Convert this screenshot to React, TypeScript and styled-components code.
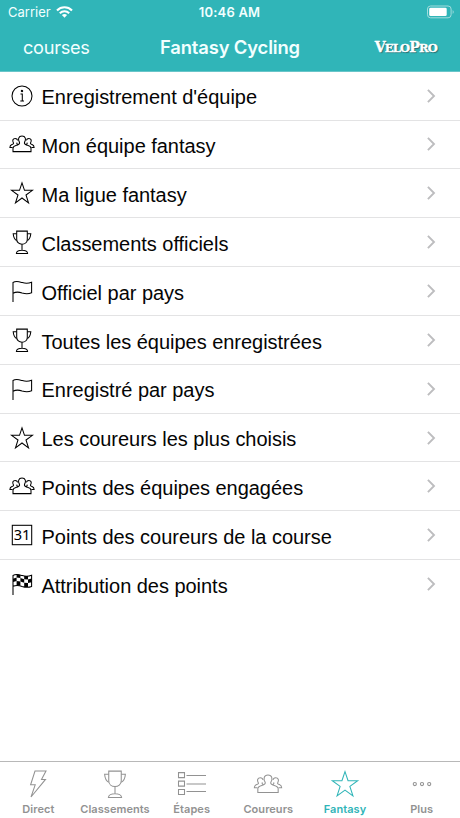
import React from "react";
import styled, { createGlobalStyle } from "styled-components";

const GlobalStyle = createGlobalStyle`
  * { box-sizing: border-box; }
  body { margin: 0; background: #fff; }
`;

const TEAL = "#30b5b8";

const Screen = styled.div`
  width: 460px;
  height: 818px;
  display: flex;
  flex-direction: column;
  overflow: hidden;
  background: #fff;
  font-family: "Liberation Sans", Arial, sans-serif;
`;

const Header = styled.header`
  height: 71.5px;
  flex: none;
  background: ${TEAL};
  color: #f2ffff;
  font-family: Inter, sans-serif;
  border-bottom: 1px solid #69c5c9;
`;

const StatusBar = styled.div`
  height: 24px;
  padding: 0 5px 0 8px;
  display: grid;
  grid-template-columns: 1fr auto 1fr;
  align-items: center;
  font-size: 13px;
`;

const Carrier = styled.div`
  display: flex;
  align-items: center;
  gap: 5px;
  letter-spacing: 0;
`;

const Clock = styled.div`
  font-weight: 600;
  letter-spacing: 0.2px;
  margin-right: 4px;
`;

const BatterySlot = styled.div`
  display: flex;
  justify-content: flex-end;
`;

const NavBar = styled.div`
  height: 46px;
  padding: 0 23px 0 23px;
  display: grid;
  grid-template-columns: 1fr auto 1fr;
  align-items: center;
`;

const BackLabel = styled.span`
  font-size: 18.2px;
  letter-spacing: -0.3px;
`;

const Title = styled.span`
  font-size: 18.4px;
  font-weight: 600;
  letter-spacing: -0.15px;
`;

const Logo = styled.span`
  justify-self: end;
  font-family: "DejaVu Serif", serif;
  font-weight: 700;
  font-size: 14px;
  line-height: 18px;
  letter-spacing: -0.8px;
  color: #fff;
  -webkit-text-stroke: 0.35px #fff;
  text-shadow: 1px 1px 1px #27686c;
`;

const SmallCaps = styled.span`
  font-size: 11.5px;
`;

const List = styled.main`
  flex: 1;
  padding-top: 0.2px;
`;

const Row = styled.div<{ $last?: boolean }>`
  height: 48.85px;
  display: flex;
  align-items: center;
  padding: 0 23px 0 7px;
  border-bottom: 1px solid ${(p) => (p.$last ? "transparent" : "#e3e3e4")};
`;

const RowLabel = styled.span`
  flex: 1;
  margin-left: 4.5px;
  font-size: 20px;
  line-height: 24px;
  letter-spacing: -0.03px;
  padding-top: 3.4px;
  white-space: nowrap;
  color: #050505;
`;

const TabBar = styled.nav`
  height: 57px;
  flex: none;
  border-top: 1px solid #b8b8b8;
  display: grid;
  grid-template-columns: repeat(6, 1fr);
`;

const Tab = styled.div<{ $active?: boolean }>`
  display: flex;
  flex-direction: column;
  align-items: center;
  padding-top: 4px;
  color: ${(p) => (p.$active ? TEAL : "#929292")};
`;

const TabLabel = styled.span`
  font-family: Inter, sans-serif;
  font-size: 11px;
  line-height: 14px;
  font-weight: 600;
  letter-spacing: 0.05px;
  white-space: nowrap;
`;

const Glyph = styled.svg<{ $size: number }>`
  width: ${(p) => p.$size}px;
  height: ${(p) => p.$size}px;
  flex: none;
  overflow: visible;
  fill: none;
  stroke: currentColor;
`;

type IconName =
  | "info" | "group" | "star" | "trophy" | "flag"
  | "calendar" | "checkered" | "bolt" | "list" | "more";

const drawings: Record<IconName, React.ReactNode> = {
  info: (
    <>
      <circle r="10" />
      <path d="M-1.5 -2H0.3V5M-1.7 5H2" />
      <circle cx="0" cy="-5" r="0.7" fill="currentColor" />
    </>
  ),
  group: (
    <>
      <path d="M-9 7.6V4.2C-9 2.2 -7.4 1.9 -5 1.2C-2.8 .5 -2 0 -2.5 -1.6C-4.4 -4.6 -3.6 -8 0 -8S4.4 -4.6 2.5 -1.6C2 0 2.8 .5 5 1.2C7.4 1.9 9 2.2 9 4.2V7.6Z" />
      <path d="M-9.4 3.4H-12.1C-12.1 1.2 -11.4 1 -10 .5C-8.5 0 -8.2 -.4 -8.7 -1.4C-9.8 -3.4 -9.2 -5.6 -6.8 -5.6C-5.4 -5.6 -4.6 -4.8 -4.4 -3.6M-5 -1.4C-5.5 -.2 -5 .2 -3.9 .6" />
      <path d="M9.4 3.4H12.1C12.1 1.2 11.4 1 10 .5C8.5 0 8.2 -.4 8.7 -1.4C9.8 -3.4 9.2 -5.6 6.8 -5.6C5.4 -5.6 4.6 -4.8 4.4 -3.6M5 -1.4C5.5 -.2 5 .2 3.9 .6" />
    </>
  ),
  star: <path d="M0 -10.2L2.5 -2.7H10.4L4 2L6.5 9.8L0 5L-6.5 9.8L-4 2L-10.4 -2.7H-2.5Z" />,
  trophy: (
    <>
      <path d="M-5.3 -10.9H5.3V-2.8C5.3 3.8 -5.3 3.8 -5.3 -2.8Z" />
      <path d="M-5.3 -8.2H-8.8C-8.6 -5.7 -8.1 -2.7 -5.3 -1.5M5.3 -8.2H8.8C8.6 -5.7 8.1 -2.7 5.3 -1.5" />
      <path d="M0 2.2V8.2M-5.6 11.5C-5.6 9.4 -3 8.2 0 8.2S5.6 9.4 5.6 11.5Z" />
    </>
  ),
  flag: <path d="M-9 11V-8.5C-5.8 -10.5 -3 -9.4 .3 -8.4C3.7 -7.4 6.5 -7.5 9.6 -8.8V1.8C6.2 3.3 3.2 3 .1 2C-3 .9 -5.8 .6 -9 2.2" />,
  calendar: (
    <>
      <rect x="-9.7" y="-9.7" width="19.4" height="19.4" />
      <text x="0" y="5.4" textAnchor="middle" fill="currentColor" stroke="none"
        fontFamily="Noto Sans, sans-serif" fontSize="14.6">31</text>
    </>
  ),
  checkered: (
    <>
      <path d="M-9 11V-8.5C-5.8 -10.5 -3 -9.4 .3 -8.4C3.7 -7.4 6.5 -7.5 9.6 -8.8V2.4C6.2 3.7 3.2 3.4 .1 2.4C-3 1.3 -5.8 1 -9 2.2" />
      <g fill="currentColor" stroke="none">
        <path d="M-5.4 -9.8L-1.6 -9.1V-5.9L-5.4 -6.5ZM2.2 -8.1L6 -8V-4.6L2.2 -4.8Z" />
        <path d="M-9 -5.3L-5.4 -6.5V-2.9L-9 -1.9ZM-1.6 -5.9L2.2 -4.8V-1.3L-1.6 -2.4ZM6 -4.6L9.6 -5.4V-1.8L6 -1Z" />
        <path d="M-5.4 -2.9L-1.6 -2.4V1.8L-5.4 1ZM2.2 -1.3L6 -1V3.1L2.2 3Z" />
      </g>
    </>
  ),
  bolt: <path d="M-3 -13H8L3.5 -4.6H7.5L-7 13L-2.8 .8H-7.4Z" />,
  list: (
    <>
      <path d="M-13.5 -11.4H-7.5V-6.4H-13.5ZM-13.5 -2.9H-7.5V2.1H-13.5ZM-13.5 5.4H-7.5V10.4H-13.5Z" />
      <path d="M-5.5 -8.5H14M-5.5 0H14M-5.5 7.5H14" />
    </>
  ),
  more: (
    <>
      <circle cx="-7.2" r="1.6" />
      <circle r="1.6" />
      <circle cx="7.2" r="1.6" />
    </>
  ),
};

interface IconProps {
  name: IconName;
  size?: number;
  scale?: number;
}

function Icon({ name, size = 30, scale = 1 }: IconProps) {
  return (
    <Glyph $size={size} viewBox={`${-size / 2} ${-size / 2} ${size} ${size}`} strokeWidth={1.05 / scale}>
      <g transform={`scale(${scale})`}>{drawings[name]}</g>
    </Glyph>
  );
}

const rows: { icon: IconName; label: string }[] = [
  { icon: "info", label: "Enregistrement d'équipe" },
  { icon: "group", label: "Mon équipe fantasy" },
  { icon: "star", label: "Ma ligue fantasy" },
  { icon: "trophy", label: "Classements officiels" },
  { icon: "flag", label: "Officiel par pays" },
  { icon: "trophy", label: "Toutes les équipes enregistrées" },
  { icon: "flag", label: "Enregistré par pays" },
  { icon: "star", label: "Les coureurs les plus choisis" },
  { icon: "group", label: "Points des équipes engagées" },
  { icon: "calendar", label: "Points des coureurs de la course" },
  { icon: "checkered", label: "Attribution des points" },
];

const tabs: { icon: IconName; label: string; scale: number; active?: boolean }[] = [
  { icon: "bolt", label: "Direct", scale: 1 },
  { icon: "trophy", label: "Classements", scale: 1.18 },
  { icon: "list", label: "Étapes", scale: 1 },
  { icon: "group", label: "Coureurs", scale: 1.13 },
  { icon: "star", label: "Fantasy", scale: 1.22, active: true },
  { icon: "more", label: "Plus", scale: 1 },
];

function Wifi() {
  return (
    <svg width="17" height="12" viewBox="0 0 17 12" fill="none" stroke="#fff" strokeWidth="2.1">
      <path d="M1 4.4C5.2 .2 11.8 .2 16 4.4M3.8 7.2C6.5 4.6 10.5 4.6 13.2 7.2" />
      <path d="M5.9 9.1Q8.5 7 11.1 9.1L8.5 11.8Z" fill="#fff" stroke="none" />
    </svg>
  );
}

function Battery() {
  return (
    <svg width="29" height="14" viewBox="0 0 29 14">
      <rect x="1.5" y="1" width="23.6" height="11.8" rx="3" fill="none" stroke="#a3dcdd" />
      <rect x="3.2" y="2.7" width="17.5" height="8.4" rx="1.4" fill="#fff" />
      <path d="M26.7 5Q28.7 7 26.7 9Z" fill="#a3dcdd" />
    </svg>
  );
}

function Chevron() {
  return (
    <svg width="12" height="16" viewBox="0 0 12 16" fill="none" stroke="#bdbdbf" strokeWidth="1.9">
      <path d="M2.9 1.9L9 8L2.9 14.1" />
    </svg>
  );
}

export default function App() {
  return (
    <Screen>
      <GlobalStyle />
      <Header>
        <StatusBar>
          <Carrier>Carrier<Wifi /></Carrier>
          <Clock>10:46 AM</Clock>
          <BatterySlot><Battery /></BatterySlot>
        </StatusBar>
        <NavBar>
          <BackLabel>courses</BackLabel>
          <Title>Fantasy Cycling</Title>
          <Logo>V<SmallCaps>ELO</SmallCaps>P<SmallCaps>RO</SmallCaps></Logo>
        </NavBar>
      </Header>
      <List>
        {rows.map((row, i) => (
          <Row key={row.label} $last={i === rows.length - 1}>
            <Icon name={row.icon} />
            <RowLabel>{row.label}</RowLabel>
            <Chevron />
          </Row>
        ))}
      </List>
      <TabBar>
        {tabs.map((tab) => (
          <Tab key={tab.label} $active={tab.active}>
            <Icon name={tab.icon} size={36} scale={tab.scale} />
            <TabLabel>{tab.label}</TabLabel>
          </Tab>
        ))}
      </TabBar>
    </Screen>
  );
}
